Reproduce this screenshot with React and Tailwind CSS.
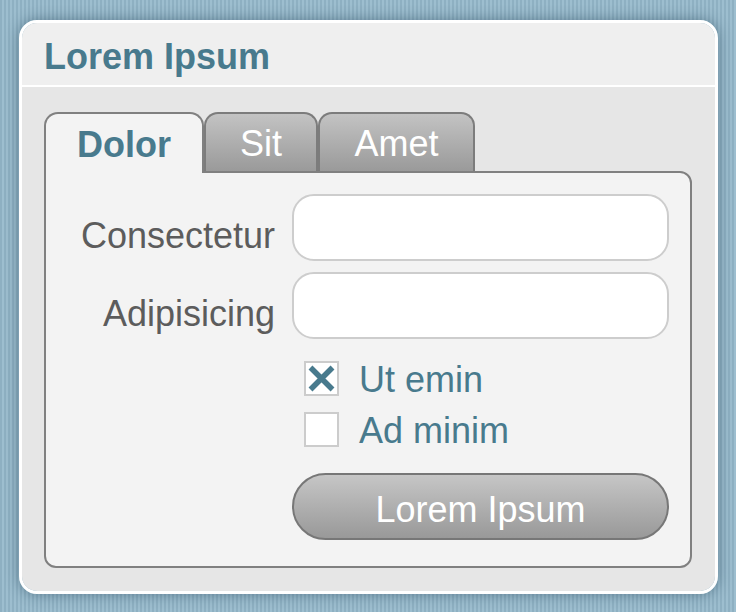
import React from "react";

const font = { fontFamily: '"Liberation Sans", Arial, sans-serif' };

const Tab = ({ label, active, width }) => (
  <div
    className={
      active
        ? "relative z-10 -mb-[2px] flex h-[61px] items-center justify-center rounded-t-[14px] border-2 border-b-0 border-[#808080] bg-[#f3f3f3] pt-[3px] text-[36px] font-bold text-[#487a8d]"
        : "flex h-[59px] items-center justify-center rounded-t-[14px] border-2 border-b-0 border-[#7c7c7c] bg-gradient-to-b from-[#c3c3c3] to-[#9a9a9a] pt-[3px] text-[36px] text-white"
    }
    style={{ width }}
  >
    {label}
  </div>
);

const Field = ({ label }) => (
  <div className="flex h-[67px] items-center">
    <div className="w-[230px] pr-[1px] pt-[15px] text-right text-[36px] leading-[41px] text-[#5c5c5c]">
      {label}
    </div>
    <input
      type="text"
      className="ml-4 box-border h-[67px] w-[377px] shrink-0 rounded-[22px] border-2 border-[#cdcdcd] bg-white px-4 outline-none"
    />
  </div>
);

const Check = ({ label, checked }) => (
  <div className="flex h-[35px] items-center pl-[258px]">
    <div className="flex h-[35px] w-[35px] items-center justify-center border-2 border-[#cccccc] bg-white">
      {checked && (
        <svg width="29" height="29" viewBox="0 0 29 29">
          <path
            d="M3.5 3.5 L25.5 25.5 M25.5 3.5 L3.5 25.5"
            stroke="#487a8d"
            strokeWidth="5.5"
            strokeLinecap="butt"
          />
        </svg>
      )}
    </div>
    <span className="ml-5 pt-[2px] text-[36px] leading-none text-[#487a8d]">{label}</span>
  </div>
);

export default function App() {
  return (
    <div
      className="h-[612px] w-[736px] bg-[repeating-linear-gradient(90deg,#8eb0c2_0px,#8eb0c2_2px,#9dbecf_2px,#9dbecf_4px)] pl-[19px] pt-[20px]"
      style={font}
    >
      <div className="flex h-[574px] w-[699px] flex-col overflow-hidden rounded-[18px] border-[3px] border-white shadow-[0_0_14px_rgba(20,50,70,0.45)]">
        <div className="flex h-[64px] shrink-0 items-center border-b-2 border-white bg-[#efefef] pl-[22px] pt-[6px] text-[36px] font-bold text-[#487a8d]">
          Lorem Ipsum
        </div>
        <div className="flex flex-1 flex-col bg-[#e6e6e6] pb-[23px] pl-[22px] pr-[23px] pt-[25px]">
          <div className="flex items-end">
            <Tab label="Dolor" active width={160} />
            <Tab label="Sit" width={114} />
            <Tab label="Amet" width={157} />
          </div>
          <div className="flex flex-1 flex-col rounded-b-[12px] rounded-tr-[12px] border-2 border-[#808080] bg-[#f3f3f3] pt-[21px]">
            <div className="flex flex-col gap-[11px]">
              <Field label="Consectetur" />
              <Field label="Adipisicing" />
            </div>
            <div className="mt-[22px] flex flex-col gap-[16px]">
              <Check label="Ut emin" checked />
              <Check label="Ad minim" />
            </div>
            <div className="mt-[26px] pl-[246px]">
              <button className="flex h-[67px] w-[377px] items-center justify-center rounded-full border-2 border-[#777777] bg-gradient-to-b from-[#c6c6c6] to-[#999999] pt-[6px] text-[36px] text-white">
                Lorem Ipsum
              </button>
            </div>
          </div>
        </div>
      </div>
    </div>
  );
}
